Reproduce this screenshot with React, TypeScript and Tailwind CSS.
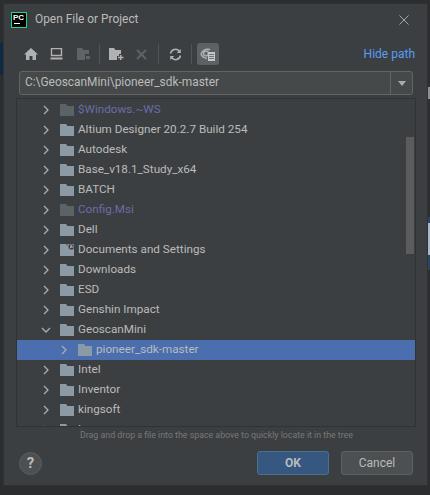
const rows: { n: string; dim?: boolean; link?: boolean; open?: boolean; sel?: boolean }[] = [
  { n: "$Windows.~WS", dim: true },
  { n: "Altium Designer 20.2.7 Build 254" },
  { n: "Autodesk" },
  { n: "Base_v18.1_Study_x64" },
  { n: "BATCH" },
  { n: "Config.Msi", dim: true },
  { n: "Dell" },
  { n: "Documents and Settings", link: true },
  { n: "Downloads" },
  { n: "ESD" },
  { n: "Genshin Impact" },
  { n: "GeoscanMini", open: true },
  { n: "pioneer_sdk-master", sel: true },
  { n: "Intel" },
  { n: "Inventor" },
  { n: "kingsoft" },
  { n: "Lenovo" },
];

function Folder({ dim, link }: { dim?: boolean; link?: boolean }) {
  return (
    <svg width="14" height="12" viewBox="0 0 14 12" className="shrink-0">
      <path d="M0 0H6L7.5 2H14V12H0Z" fill={dim ? "#5c6367" : "#8c9aa5"} />
      {link && (
        <g>
          <rect x="8" y="-0" width="6" height="6" fill="#3c3f41" stroke="#a0a5a8" strokeWidth="1" />
          <path d="M9.5 4.5L12 2M10 2H12V4" fill="none" stroke="#c0c4c6" strokeWidth="0.9" />
        </g>
      )}
    </svg>
  );
}

function Chevron({ open }: { open?: boolean }) {
  return (
    <svg width="10" height="10" viewBox="0 0 10 10" className="shrink-0">
      <path d={open ? "M1 3L5 7L9 3" : "M3 1L7 5L3 9"} fill="none" stroke="#a9adb0" strokeWidth="1.3" />
    </svg>
  );
}

function Row({ r }: { r: (typeof rows)[number] }) {
  return (
    <div className={`flex h-5 shrink-0 items-center ${r.sel ? "bg-[#4b6eaf] pl-[42px]" : "pl-[24px]"}`}>
      <Chevron open={r.open} />
      <span className="ml-[9px]">
        <Folder dim={r.dim} link={r.link} />
      </span>
      <span className={`ml-[4px] whitespace-nowrap text-[11.7px] ${r.dim ? "text-[#6b6ba8]" : "text-[#bbbbbb]"}`}>{r.n}</span>
    </div>
  );
}

export default function App() {
  return (
    <div className="relative h-[495px] w-[430px] overflow-hidden bg-[#2b2d2e] pl-[3px] pt-[3px] font-['Roboto','Noto_Sans',sans-serif] text-[12px] leading-none">
      <div className="absolute left-0 top-[43px] h-8 w-[3px] bg-[#0c2a44]" />
      <div className="absolute right-0 top-[87px] h-3 w-[2px] bg-[#8f9193]" />
      <div className="absolute right-0 top-[217px] h-[53px] w-[2px] bg-[#2d4564]" />
      <div className="absolute right-0 top-[223px] h-8 w-[2px] bg-[#aab7c9]" />
      <div className="flex h-[483px] w-[425px] flex-col border border-[#2f3132] bg-[#3c3f41]">
        {/* title */}
        <div className="flex h-[30px] shrink-0 items-center pl-[7px] pr-[18px] pt-[1px]">
          <div className="relative flex h-4 w-4 shrink-0 flex-col border border-[#21d789] bg-black">
            <span className="ml-[1px] mt-[1px] font-['Liberation_Sans',sans-serif] text-[8px] font-bold leading-[8px] text-white">PC</span>
            <span className="ml-[2px] mt-[1px] h-[1px] w-[6px] bg-white" />
          </div>
          <span className="ml-2 text-[11.9px] text-[#bbbbbb]">Open File or Project</span>
          <svg width="10" height="10" viewBox="0 0 10 10" className="ml-auto">
            <path d="M0.5 0.5L9.5 9.5M9.5 0.5L0.5 9.5" stroke="#a4a6a8" strokeWidth="1" />
          </svg>
        </div>
        {/* toolbar */}
        <div className="flex h-[37px] shrink-0 items-center pl-[20px] pr-[12px] pt-[3px]">
          <svg width="14" height="12" viewBox="0 0 14 12"><path d="M7 0L14 6.5H12V12H8.5V8H5.5V12H2V6.5H0Z" fill="#afb1b3" /></svg>
          <svg width="13" height="12" viewBox="0 0 13 12" className="ml-[12px]">
            <path d="M1.5 .5H11.5V7.5H1.5Z" fill="none" stroke="#afb1b3" strokeWidth="1.4" />
            <rect x="0.5" y="9.5" width="12" height="2" fill="#afb1b3" />
          </svg>
          <svg width="14" height="12" viewBox="0 0 14 12" className="ml-[14px]">
            <path d="M0 0H5L6.5 2H12V6H8V12H0Z" fill="#5e6365" />
            <rect x="9" y="8" width="4" height="3" fill="#5e6365" />
          </svg>
          <div className="ml-[8px] h-[20px] w-px bg-[#515355]" />
          <svg width="15" height="12" viewBox="0 0 15 12" className="ml-[9px]">
            <path d="M0 0H5L6.5 2H12V6H10V8H8V12H0Z" fill="#afb1b3" />
            <path d="M9 9.5H14.5M11.7 7V12" stroke="#afb1b3" strokeWidth="1.5" />
          </svg>
          <svg width="11" height="11" viewBox="0 0 11 11" className="ml-[12px]">
            <path d="M1 1L10 10M10 1L1 10" stroke="#5e6365" strokeWidth="2" />
          </svg>
          <div className="ml-[11px] h-[20px] w-px bg-[#515355]" />
          <svg width="13" height="13" viewBox="0 0 13 13" className="ml-[10px]">
            <path d="M1.5 5.5A5 5 0 0 1 10.5 3.5M11.5 7.5A5 5 0 0 1 2.5 9.5" fill="none" stroke="#afb1b3" strokeWidth="1.5" />
            <path d="M11.8 1V5H7.8ZM1.2 12V8H5.2Z" fill="#afb1b3" />
          </svg>
          <div className="ml-[9px] h-[20px] w-px bg-[#515355]" />
          <div className="ml-[5px] flex h-[22px] w-[22px] items-center justify-center rounded-[3px] bg-[#5c6164]">
            <svg width="16" height="13" viewBox="0 0 16 13">
              <path d="M1 6C3 2 6.5.8 10 1.6" fill="none" stroke="#afb1b3" strokeWidth="1.6" />
              <path d="M1 6C2 8.5 4 10 7 10.5" fill="none" stroke="#afb1b3" strokeWidth="1.6" />
              <circle cx="6" cy="5.5" r="2.4" fill="none" stroke="#afb1b3" strokeWidth="1.4" />
              <rect x="8" y="4" width="7" height="9" fill="#c4c6c8" />
              <path d="M9 6.5H14M9 8.5H14M9 10.5H14" stroke="#5c6164" strokeWidth="0.8" />
            </svg>
          </div>
          <span className="ml-auto text-[12px] text-[#589df6]">Hide path</span>
        </div>
        {/* path */}
        <div className="ml-[15px] mr-[14px] flex h-[24px] shrink-0 items-center rounded-[3px] border border-[#646464] bg-[#45494a]">
          <span className="flex-1 pl-[5px] text-[11.9px] text-[#bbbbbb]">C:\GeoscanMini\pioneer_sdk-master</span>
          <div className="flex h-full w-[22px] items-center justify-center border-l border-[#646464]">
            <div className="h-0 w-0 border-x-[4px] border-t-[5px] border-x-transparent border-t-[#a9abad]" />
          </div>
        </div>
        {/* tree */}
        <div className="relative ml-[12px] mr-[11px] mt-[3px] flex h-[329px] shrink-0 flex-col overflow-hidden border border-[#323232] pt-[1px]">
          {rows.map((r) => (
            <Row key={r.n} r={r} />
          ))}
          <div className="absolute right-[1px] top-[38px] h-[117px] w-2 bg-[#5a5c5e]" />
        </div>
        <div className="mt-[2px] pl-[76px] pr-[12px] text-[8.8px] leading-[12px] text-[#787878]">
          Drag and drop a file into the space above to quickly locate it in the tree
        </div>
        {/* footer */}
        <div className="mt-[10px] flex items-center pl-[15px] pr-[14px]">
          <div className="flex h-[23px] w-[23px] items-center justify-center rounded-full border border-[#5a5d5f] bg-[#4c5052] text-[15px] font-bold text-[#bbbbbb]">?</div>
          <div className="ml-auto flex h-6 w-[72px] items-center justify-center rounded-[3px] border border-[#4c708c] bg-[#365880] font-bold text-[#bbbbbb]">OK</div>
          <div className="ml-[12px] flex h-6 w-[72px] items-center justify-center rounded-[3px] border border-[#5e6060] bg-[#4c5052] text-[#bbbbbb]">Cancel</div>
        </div>
      </div>
    </div>
  );
}
